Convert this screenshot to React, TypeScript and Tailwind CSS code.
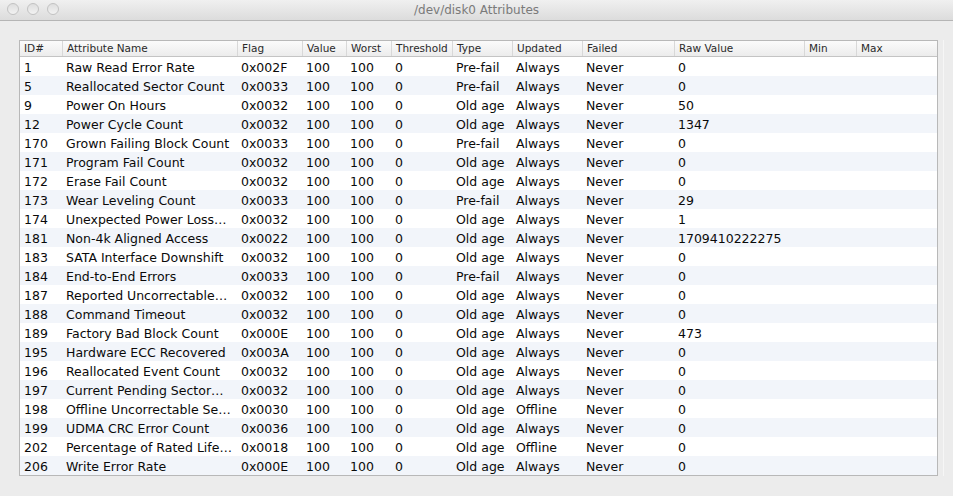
import React from "react";

const rows: string[][] = [
  ["1", "Raw Read Error Rate", "0x002F", "100", "100", "0", "Pre-fail", "Always", "Never", "0"],
  ["5", "Reallocated Sector Count", "0x0033", "100", "100", "0", "Pre-fail", "Always", "Never", "0"],
  ["9", "Power On Hours", "0x0032", "100", "100", "0", "Old age", "Always", "Never", "50"],
  ["12", "Power Cycle Count", "0x0032", "100", "100", "0", "Old age", "Always", "Never", "1347"],
  ["170", "Grown Failing Block Count", "0x0033", "100", "100", "0", "Pre-fail", "Always", "Never", "0"],
  ["171", "Program Fail Count", "0x0032", "100", "100", "0", "Old age", "Always", "Never", "0"],
  ["172", "Erase Fail Count", "0x0032", "100", "100", "0", "Old age", "Always", "Never", "0"],
  ["173", "Wear Leveling Count", "0x0033", "100", "100", "0", "Pre-fail", "Always", "Never", "29"],
  ["174", "Unexpected Power Loss…", "0x0032", "100", "100", "0", "Old age", "Always", "Never", "1"],
  ["181", "Non-4k Aligned Access", "0x0022", "100", "100", "0", "Old age", "Always", "Never", "1709410222275"],
  ["183", "SATA Interface Downshift", "0x0032", "100", "100", "0", "Old age", "Always", "Never", "0"],
  ["184", "End-to-End Errors", "0x0033", "100", "100", "0", "Pre-fail", "Always", "Never", "0"],
  ["187", "Reported Uncorrectable…", "0x0032", "100", "100", "0", "Old age", "Always", "Never", "0"],
  ["188", "Command Timeout", "0x0032", "100", "100", "0", "Old age", "Always", "Never", "0"],
  ["189", "Factory Bad Block Count", "0x000E", "100", "100", "0", "Old age", "Always", "Never", "473"],
  ["195", "Hardware ECC Recovered", "0x003A", "100", "100", "0", "Old age", "Always", "Never", "0"],
  ["196", "Reallocated Event Count", "0x0032", "100", "100", "0", "Old age", "Always", "Never", "0"],
  ["197", "Current Pending Sector…", "0x0032", "100", "100", "0", "Old age", "Always", "Never", "0"],
  ["198", "Offline Uncorrectable Se…", "0x0030", "100", "100", "0", "Old age", "Offline", "Never", "0"],
  ["199", "UDMA CRC Error Count", "0x0036", "100", "100", "0", "Old age", "Always", "Never", "0"],
  ["202", "Percentage of Rated Life…", "0x0018", "100", "100", "0", "Old age", "Offline", "Never", "0"],
  ["206", "Write Error Rate", "0x000E", "100", "100", "0", "Old age", "Always", "Never", "0"],
];

const headers = ["ID#", "Attribute Name", "Flag", "Value", "Worst", "Threshold", "Type", "Updated", "Failed", "Raw Value", "Min", "Max"];

const cols = "grid grid-cols-[42px_175px_65px_44px_45px_61px_60px_70px_92px_130px_52px_1fr]";

export default function App() {
  return (
    <div className="w-[953px] h-[496px] bg-[#ececec] flex flex-col overflow-hidden" style={{ fontFamily: '"DejaVu Sans", "Noto Sans", sans-serif' }}>
      <div className="relative h-[21px] shrink-0 bg-gradient-to-b from-[#f0f0f0] to-[#dcdcdc] border-b border-[#b5b5b5] flex items-center justify-center">
        <div className="absolute left-[7px] top-[3px] flex gap-[8px]">
          <div className="w-[12px] h-[12px] rounded-full border border-[#c2c2c2] bg-gradient-to-b from-[#dedede] to-[#f2f2f2]" />
          <div className="w-[12px] h-[12px] rounded-full border border-[#c2c2c2] bg-gradient-to-b from-[#dedede] to-[#f2f2f2]" />
          <div className="w-[12px] h-[12px] rounded-full border border-[#c2c2c2] bg-gradient-to-b from-[#dedede] to-[#f2f2f2]" />
        </div>
        <span className="text-[12px] text-[#7a7a7a] leading-none">/dev/disk0 Attributes</span>
      </div>
      <div className="flex-1 flex pt-[19px] pl-[19px] pr-[6px] pb-[20px]">
        <div className="w-[919px] border border-[#b8b8b8] bg-white">
          <div className={`${cols} h-[16px] bg-gradient-to-b from-[#fbfbfb] to-[#ececec] border-b border-[#c4c4c4]`}>
            {headers.map((h, i) => (
              <div key={h} className={`text-[10.5px] text-[#2a2a2a] leading-[15px] pl-[4px] whitespace-nowrap overflow-hidden ${i > 0 ? "border-l border-[#d8d8d8]" : ""}`}>
                {h}
              </div>
            ))}
          </div>
          {rows.map((r, ri) => (
            <div key={ri} className={`${cols} h-[19px] ${ri % 2 === 1 ? "bg-[#f2f5fa]" : "bg-white"}`}>
              {[...r, "", ""].map((c, ci) => (
                <div key={ci} className="text-[12.5px] text-[#0a0a0a] leading-[21px] pl-[4px] whitespace-nowrap overflow-hidden">
                  {c}
                </div>
              ))}
            </div>
          ))}
        </div>
        <div className="w-px ml-[5px] bg-[#f6f6f6]" />
      </div>
    </div>
  );
}
